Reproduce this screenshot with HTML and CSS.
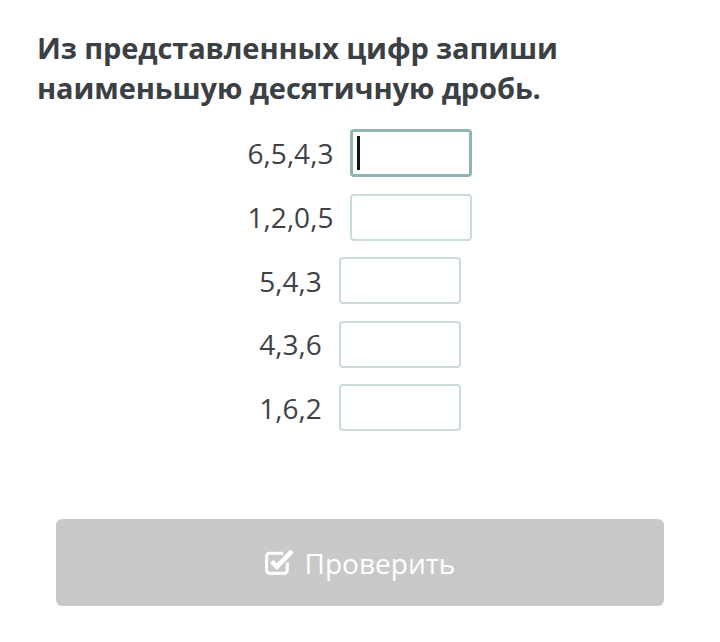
FILE: index.html
```html
<!DOCTYPE html>
<html lang="ru">
<head>
<meta charset="utf-8">
<link rel="stylesheet" href="styles.css">
</head>
<body>
<div class="page">
  <h1 class="title">Из представленных цифр запиши наименьшую десятичную дробь.</h1>
  <div class="rows">
    <div class="row"><span class="label">6,5,4,3</span><div class="box focused"><span class="caret"></span></div></div>
    <div class="row"><span class="label">1,2,0,5</span><div class="box"></div></div>
    <div class="row"><span class="label">5,4,3</span><div class="box"></div></div>
    <div class="row"><span class="label">4,3,6</span><div class="box"></div></div>
    <div class="row"><span class="label">1,6,2</span><div class="box"></div></div>
  </div>
  <button class="check">
    <svg class="icon" width="29" height="29" viewBox="0 0 28 28">
      <path d="M21.5 15v7.5a3 3 0 0 1-3 3H4.5a3 3 0 0 1-3-3V9a3 3 0 0 1 3-3h13" fill="none" stroke="#fff" stroke-width="3" stroke-linejoin="round"/>
      <path d="M6.5 14l5 5L26 4" fill="none" stroke="#fff" stroke-width="4.4" stroke-linejoin="miter"/>
    </svg>
    <span>Проверить</span>
  </button>
</div>
</body>
</html>
```
FILE: styles.css
```css
html, body {
  margin: 0;
  padding: 0;
  background: #fff;
}
.page {
  width: 720px;
  height: 642px;
  font-family: "Open Sans", "Noto Sans", sans-serif;
  color: #3b4045;
  box-sizing: border-box;
  padding: 28px 0 0;
}
.title {
  margin: 0;
  padding: 0 37px;
  font-size: 29px;
  font-weight: 700;
  line-height: 40px;
  letter-spacing: -0.1px;
  color: #3b4045;
}
.rows {
  display: flex;
  flex-direction: column;
  align-items: center;
  gap: 16.5px;
  margin-top: 21px;
}
.row {
  display: flex;
  align-items: center;
  gap: 17px;
}
.label {
  font-size: 28px;
  color: #3d4247;
}
.box {
  width: 122px;
  height: 47px;
  border: 2px solid #cadcdb;
  border-radius: 4px;
  display: flex;
  align-items: center;
  padding-left: 4px;
  box-sizing: border-box;
}
.box.focused {
  border: 3px solid #8fb4b6;
  height: 48px;
}
.caret {
  width: 2.5px;
  height: 34px;
  background: #111;
}
.check {
  display: flex;
  align-items: center;
  justify-content: center;
  gap: 11px;
  margin: 88px 0 0 56px;
  width: 608px;
  height: 87px;
  border: none;
  border-radius: 6px;
  background: #c9c9c9;
  color: #fff;
  font-family: "Open Sans", "Noto Sans", sans-serif;
  font-size: 28px;
  padding: 0;
}
.icon {
  display: block;
  margin-top: -2px;
}
```
